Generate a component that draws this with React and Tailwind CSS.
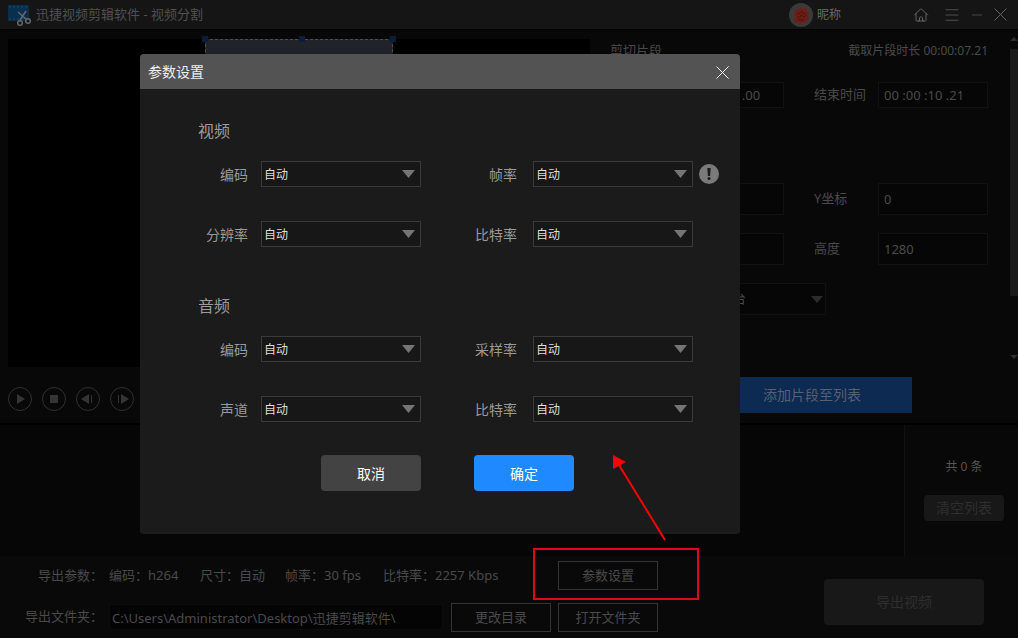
import { useState } from 'react';
import { Menu, Minus } from 'lucide-react';
import { HiOutlineHome } from 'react-icons/hi2';

const VIDEO_FIELDS = [
  { id: 'v-codec', label: '编码' },
  { id: 'v-fps', label: '帧率', hint: true },
  { id: 'v-size', label: '分辨率' },
  { id: 'v-bitrate', label: '比特率' },
];

const AUDIO_FIELDS = [
  { id: 'a-codec', label: '编码' },
  { id: 'a-sample', label: '采样率' },
  { id: 'a-channel', label: '声道' },
  { id: 'a-bitrate', label: '比特率' },
];

function CloseIcon() {
  return (
    <svg className="w-[13px] h-[13px]" viewBox="0 0 13 13" fill="none" stroke="currentColor">
      <path d="M.5 .5l12 12M12.5 .5l-12 12" />
    </svg>
  );
}

function Logo() {
  return (
    <svg className="w-6 h-6" viewBox="0 0 24 24" fill="none">
      <rect x="1" y="2" width="21" height="16" rx="1" fill="#08304d" />
      <path d="M2 4h19M2 16h19" stroke="#0b4468" strokeWidth="1.5" strokeDasharray="2 2" />
      <path d="M11 9l9 8M19 8l-6 9" stroke="#65686a" strokeWidth="1.5" />
      <circle cx="13" cy="20" r="2.3" stroke="#65686a" strokeWidth="1.5" fill="#151515" />
      <circle cx="21" cy="18" r="2.3" stroke="#65686a" strokeWidth="1.5" fill="#151515" />
    </svg>
  );
}

function Avatar() {
  return (
    <svg className="w-6 h-6" viewBox="0 0 24 24">
      <circle cx="12" cy="12" r="12" fill="#3a3a3a" />
      <path
        d="M8 6l2 0 2-2 2 2 3-1 1 3 2 3-1 2 1 3-3 1-1 3-3-1-2 2-2-2-3 1-1-4 1-1-1-3 1-3z"
        fill="#6e1c15"
      />
      <path d="M8 10l2 1 3-3 1 3 3-1M8 14l3 0 1-2 3 2 3-2M9 17l3-1 1 2 2-2" stroke="#3d110d" strokeWidth=".7" fill="none" />
    </svg>
  );
}

function TitleBar() {
  return (
    <header className="flex items-center h-[30px] bg-[#151515] border-b border-black pl-[7px] pr-[11px]">
      <Logo />
      <h1 className="ml-[5px] flex-1 text-[13px] text-[#505050]">迅捷视频剪辑软件 - 视频分割</h1>
      <Avatar />
      <span className="ml-1 flex-none w-24 text-xs text-[#686868]">昵称</span>
      <div className="flex items-center text-[#626262]">
        <button aria-label="主页"><HiOutlineHome size={16} /></button>
        <button aria-label="菜单" className="ml-[14px]"><Menu size={18} strokeWidth={1} /></button>
        <button aria-label="最小化" className="ml-2"><Minus size={16} strokeWidth={1} /></button>
        <button aria-label="关闭" className="ml-[9px]"><CloseIcon /></button>
      </div>
    </header>
  );
}

function RoundButton({ label, children }) {
  return (
    <button aria-label={label} className="w-6 h-6 rounded-full border border-[#303030] flex items-center justify-center">
      <svg className="w-[22px] h-[22px]" viewBox="0 0 22 22" fill="#343434">{children}</svg>
    </button>
  );
}

function Player() {
  return (
    <div className="flex flex-col w-[590px] pl-2 pt-[9px]">
      <div className="flex-1 bg-black flex justify-center">
        <div className="relative w-[188px] h-40 bg-[#20242a] border border-dashed border-[#4a4d52]">
          <i className="absolute -left-1 -top-1 w-1.5 h-1.5 bg-[#0b1d3a]" />
          <i className="absolute left-1/2 -top-1 w-1.5 h-1.5 bg-[#0b1d3a]" />
          <i className="absolute -right-1 -top-1 w-1.5 h-1.5 bg-[#0b1d3a]" />
        </div>
      </div>
      <div className="flex items-center gap-[10px] h-14 pt-2">
        <RoundButton label="播放"><path d="M8 6v10l8-5z" /></RoundButton>
        <RoundButton label="停止"><path d="M7 7h8v8H7z" /></RoundButton>
        <RoundButton label="上一帧"><path d="M12 6v10l-8-5zM14 7h1v8h-1z" /></RoundButton>
        <RoundButton label="下一帧"><path d="M10 6v10l8-5zM7 7h1v8H7z" /></RoundButton>
      </div>
    </div>
  );
}

function ClipField({ id, label, value, className }) {
  return (
    <>
      <label htmlFor={id}>{label}</label>
      <input
        id={id}
        defaultValue={value}
        className={`w-[110px] border border-[#111] bg-[#060606] px-[5px] ${className}`}
      />
    </>
  );
}

function ClipPanel() {
  return (
    <div className="flex-1 flex flex-col pl-5 text-[13px] text-[#4a4a4a]">
      <div className="flex-1 flex">
        <div className="flex-1 pt-[11px]">
          <div className="flex items-center justify-between h-5 pr-[22px]">
            <h2>剪切片段</h2>
            <p className="text-xs">截取片段时长 00:00:07.21</p>
          </div>
          <div className="grid grid-cols-[64px_140px_64px_110px] items-center mt-[21px]">
            <ClipField id="start" label="开始时间" value="00 :00 :03 .00" className="h-[26px]" />
            <ClipField id="end" label="结束时间" value="00 :00 :10 .21" className="h-[26px]" />
          </div>
          <div className="grid grid-cols-[64px_140px_64px_110px] items-center gap-y-[18px] mt-[75px]">
            <ClipField id="pos-x" label="X坐标" value="0" className="h-8" />
            <ClipField id="pos-y" label="Y坐标" value="0" className="h-8" />
            <ClipField id="width" label="宽度" value="720" className="h-8" />
            <ClipField id="height" label="高度" value="1280" className="h-8" />
          </div>
          <div className="flex items-center mt-[18px]">
            <label htmlFor="platform" className="w-16">平台</label>
            <div className="relative w-[152px]">
              <select id="platform" className="w-full h-8 appearance-none border border-[#111] bg-[#060606] px-[6px]">
                <option>自定义平台</option>
              </select>
              <svg className="absolute right-[3px] top-[13px] w-3 h-[7px] pointer-events-none" viewBox="0 0 12 7" fill="#2c2c2c">
                <path d="M0 0h12L6 7z" />
              </svg>
            </div>
          </div>
        </div>
        <div className="w-2 flex flex-col justify-between items-center pt-[7px] pb-2">
          <svg className="w-2 h-1" viewBox="0 0 8 4" fill="#2c2c2c"><path d="M0 4h8L4 0z" /></svg>
          <div className="w-2 h-[247px] mb-auto mt-2 bg-[#191919]" />
          <svg className="w-2 h-1" viewBox="0 0 8 4" fill="#2c2c2c"><path d="M0 0h8L4 4z" /></svg>
        </div>
      </div>
      <div className="flex h-14 pt-[10px] pl-[102px]">
        <button className="w-[200px] h-9 bg-[#0c2a52] text-sm text-[#566071]">添加片段至列表</button>
      </div>
    </div>
  );
}

function ClipList() {
  return (
    <section className="flex h-[133px] border-t-2 border-black">
      <div className="flex-1 bg-[#060606]" />
      <div className="w-[114px] border-l border-[#111] flex flex-col items-center pl-[5px] pt-8 bg-[#080808]">
        <p className="text-xs leading-5 text-[#555]">共 0 条</p>
        <button className="mt-[18px] w-20 h-[26px] rounded-sm bg-[#181818] text-sm text-[#2e2e2e]">清空列表</button>
      </div>
    </section>
  );
}

function Callout() {
  return (
    <svg
      className="absolute z-20 left-[-26px] bottom-[-10px] w-[168px] h-[150px] pointer-events-none"
      viewBox="0 0 168 150"
      fill="none"
    >
      <path d="M2 99h164v50H2z" stroke="#dc0a18" strokeWidth="2" />
      <path d="M133 90L87 15" stroke="#fe0000" strokeWidth="2" />
      <path d="M81 5v14l13-7z" fill="#fe0000" />
    </svg>
  );
}

function ExportBar() {
  const outline = 'w-[100px] h-[29px] border border-[#343434] pt-px text-[13px]';
  return (
    <footer className="flex h-[82px] bg-[#090909] text-[13px] text-[#4a4a4a]">
      <div className="w-[658px] pt-1">
        <div className="flex items-center justify-between pl-[38px] h-[30px]">
          <div className="flex items-center whitespace-nowrap pt-0.5">
            <span className="w-[71px]">导出参数：</span>
            <span className="w-[91px]">编码：h264</span>
            <span className="w-[85px]">尺寸：自动</span>
            <span className="w-[98px]">帧率：30 fps</span>
            <span>比特率：2257 Kbps</span>
          </div>
          <div className="relative flex">
            <button className={outline}>参数设置</button>
            <Callout />
          </div>
        </div>
        <div className="flex items-center pl-[25px] mt-3 h-[30px]">
          <label htmlFor="folder" className="w-[84px]">导出文件夹：</label>
          <input
            id="folder"
            defaultValue="C:\Users\Administrator\Desktop\迅捷剪辑软件\"
            className="flex-1 min-w-0 h-[26px] border border-[#0c0c0c] bg-[#040404] px-[2px]"
          />
          <button className={`ml-2 ${outline}`}>更改目录</button>
          <button className={`ml-[7px] ${outline}`}>打开文件夹</button>
        </div>
      </div>
      <div className="flex-1 flex justify-end pr-[34px] pt-[23px]">
        <button className="w-40 h-[46px] rounded bg-[#181818] text-sm text-[#2e2e2e]">导出视频</button>
      </div>
    </footer>
  );
}

function AutoSelect({ id }) {
  return (
    <div className="relative">
      <select
        id={id}
        className="block w-full h-[26px] appearance-none border border-[#3a3a3a] bg-[#171717] px-[2px] pt-px text-xs text-[#dedede]"
      >
        <option>自动</option>
      </select>
      <svg className="absolute right-[6px] top-[9px] w-[13px] h-2 pointer-events-none" viewBox="0 0 13 8" fill="#757575">
        <path d="M0 0h13L6.5 8z" />
      </svg>
    </div>
  );
}

function FieldGroup({ title, fields }) {
  return (
    <section>
      <h3 className="text-base leading-6 text-[#9a9a9a]">{title}</h3>
      <div className="grid grid-cols-[63px_160px_112px_160px] gap-y-[34px] items-center mt-[18px]">
        {fields.map((field, i) => (
          <div key={field.id} className="contents">
            <label
              htmlFor={field.id}
              className={`pt-px text-right text-sm text-[#999] ${i % 2 ? 'pr-4' : 'pr-[13px]'}`}
            >
              {field.label}
            </label>
            <div className="relative">
              <AutoSelect id={field.id} />
              {field.hint && (
                <svg className="absolute left-[166px] top-[3px] w-5 h-5" viewBox="0 0 20 20">
                  <circle cx="10" cy="10" r="10" fill="#7a7a7a" />
                  <path d="M8.3 4h3.4l-.6 8H8.9z" fill="#1b1b1b" />
                  <circle cx="10" cy="14.6" r="1.5" fill="#1b1b1b" />
                </svg>
              )}
            </div>
          </div>
        ))}
      </div>
    </section>
  );
}

function SettingsDialog({ onClose }) {
  return (
    <div className="absolute inset-0 z-10 pl-[140px] pt-[54px]">
      <div role="dialog" aria-label="参数设置" className="w-[600px] rounded bg-[#1b1b1b] overflow-hidden">
        <div className="flex items-center justify-between h-[35px] pl-2 pr-[11px] pt-px bg-[#535353]">
          <h2 className="text-sm text-[#eee]">参数设置</h2>
          <button aria-label="关闭" onClick={onClose} className="text-white">
            <CloseIcon />
          </button>
        </div>
        <div className="flex flex-col gap-[47px] pl-[58px] pt-[30px]">
          <FieldGroup title="视频" fields={VIDEO_FIELDS} />
          <FieldGroup title="音频" fields={AUDIO_FIELDS} />
        </div>
        <div className="flex gap-[53px] pl-[181px] pt-[33px] pb-[43px] text-sm text-white">
          <button onClick={onClose} className="w-[100px] h-9 pt-px rounded-sm bg-[#434343]">取消</button>
          <button onClick={onClose} className="w-[100px] h-9 pt-px rounded-sm bg-[#1f8aff]">确定</button>
        </div>
      </div>
    </div>
  );
}

export default function App() {
  const [open, setOpen] = useState(true);

  return (
    <div className="relative flex flex-col min-h-screen bg-[#080808] font-['Noto_Sans','Noto_Sans_CJK_SC',sans-serif]">
      <TitleBar />
      <main className="flex-1 flex">
        <Player />
        <ClipPanel />
      </main>
      <ClipList />
      <ExportBar />
      {open && <SettingsDialog onClose={() => setOpen(false)} />}
    </div>
  );
}
